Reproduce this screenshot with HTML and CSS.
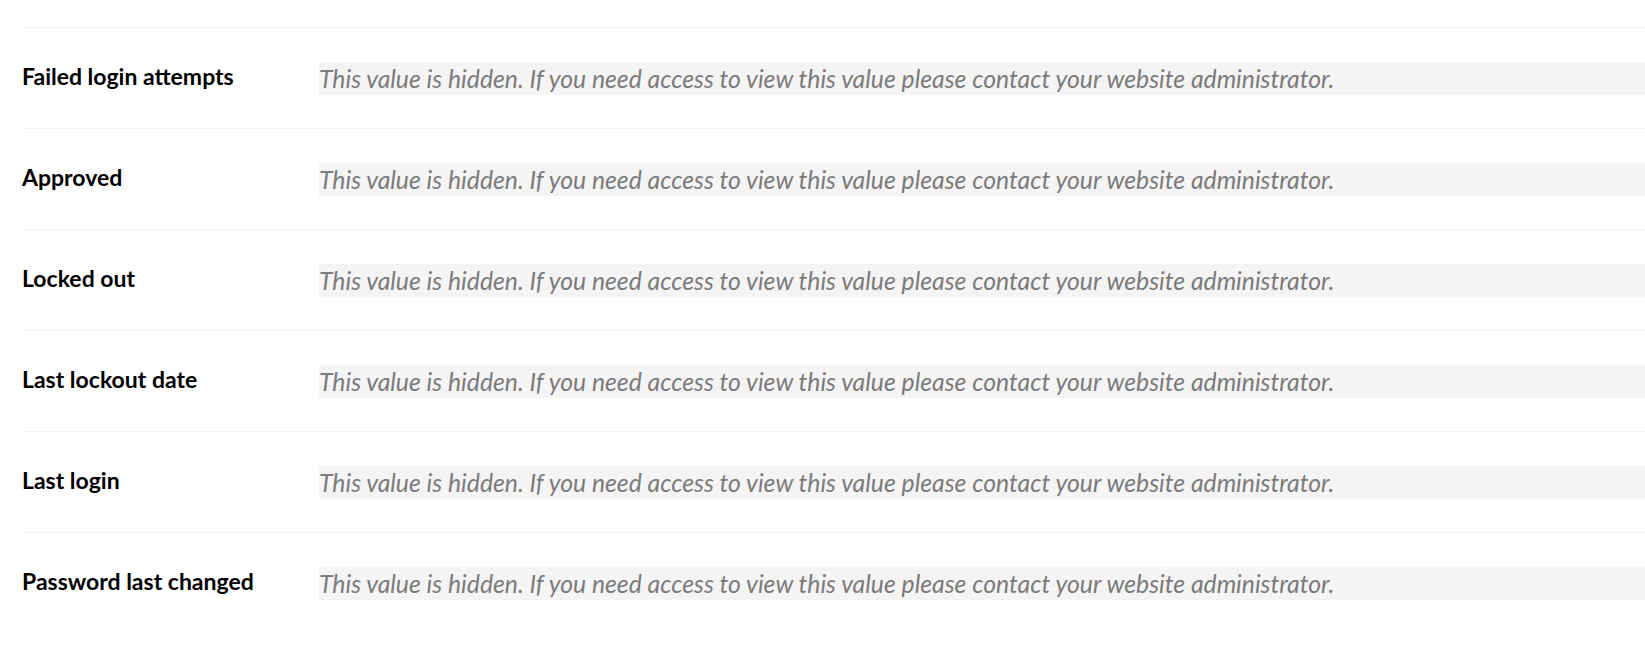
FILE: index.html
```html
<!DOCTYPE html>
<html lang="en">

<head>
    <meta charset="UTF-8">
    <meta name="viewport" content="width=device-width, initial-scale=1.0">
    <title>Member properties</title>
    <link rel="stylesheet" href="styles.css">
</head>

<body>
    <div class="properties">
        <div class="property">
            <div class="property-label">Failed login attempts</div>
            <div class="property-value">This value is hidden. If you need access to view this value please contact your website administrator.</div>
        </div>
        <div class="property">
            <div class="property-label">Approved</div>
            <div class="property-value">This value is hidden. If you need access to view this value please contact your website administrator.</div>
        </div>
        <div class="property">
            <div class="property-label">Locked out</div>
            <div class="property-value">This value is hidden. If you need access to view this value please contact your website administrator.</div>
        </div>
        <div class="property">
            <div class="property-label">Last lockout date</div>
            <div class="property-value">This value is hidden. If you need access to view this value please contact your website administrator.</div>
        </div>
        <div class="property">
            <div class="property-label">Last login</div>
            <div class="property-value">This value is hidden. If you need access to view this value please contact your website administrator.</div>
        </div>
        <div class="property">
            <div class="property-label">Password last changed</div>
            <div class="property-value">This value is hidden. If you need access to view this value please contact your website administrator.</div>
        </div>
    </div>
</body>

</html>
```

FILE: styles.css
```css
body {
    font-family: Lato, "Open Sans", sans-serif;
    background-color: #fff;
    margin: 0;
    padding: 0;
    overflow: hidden;
}

.properties {
    padding-top: 27px;
    margin-left: 22px;
}

.property {
    display: flex;
    align-items: center;
    height: 100px;
    border-top: 1px solid #f3f3f3;
}

.property-label {
    width: 297px;
    flex-shrink: 0;
    margin-bottom: 4px;
    font-size: 23px;
    font-weight: bold;
    color: #000;
}

.property-value {
    flex: 1;
    background-color: #f5f4f4;
    color: #7b7b7b;
    font-size: 24.75px;
    font-style: italic;
    line-height: 33px;
    white-space: nowrap;
}
```
